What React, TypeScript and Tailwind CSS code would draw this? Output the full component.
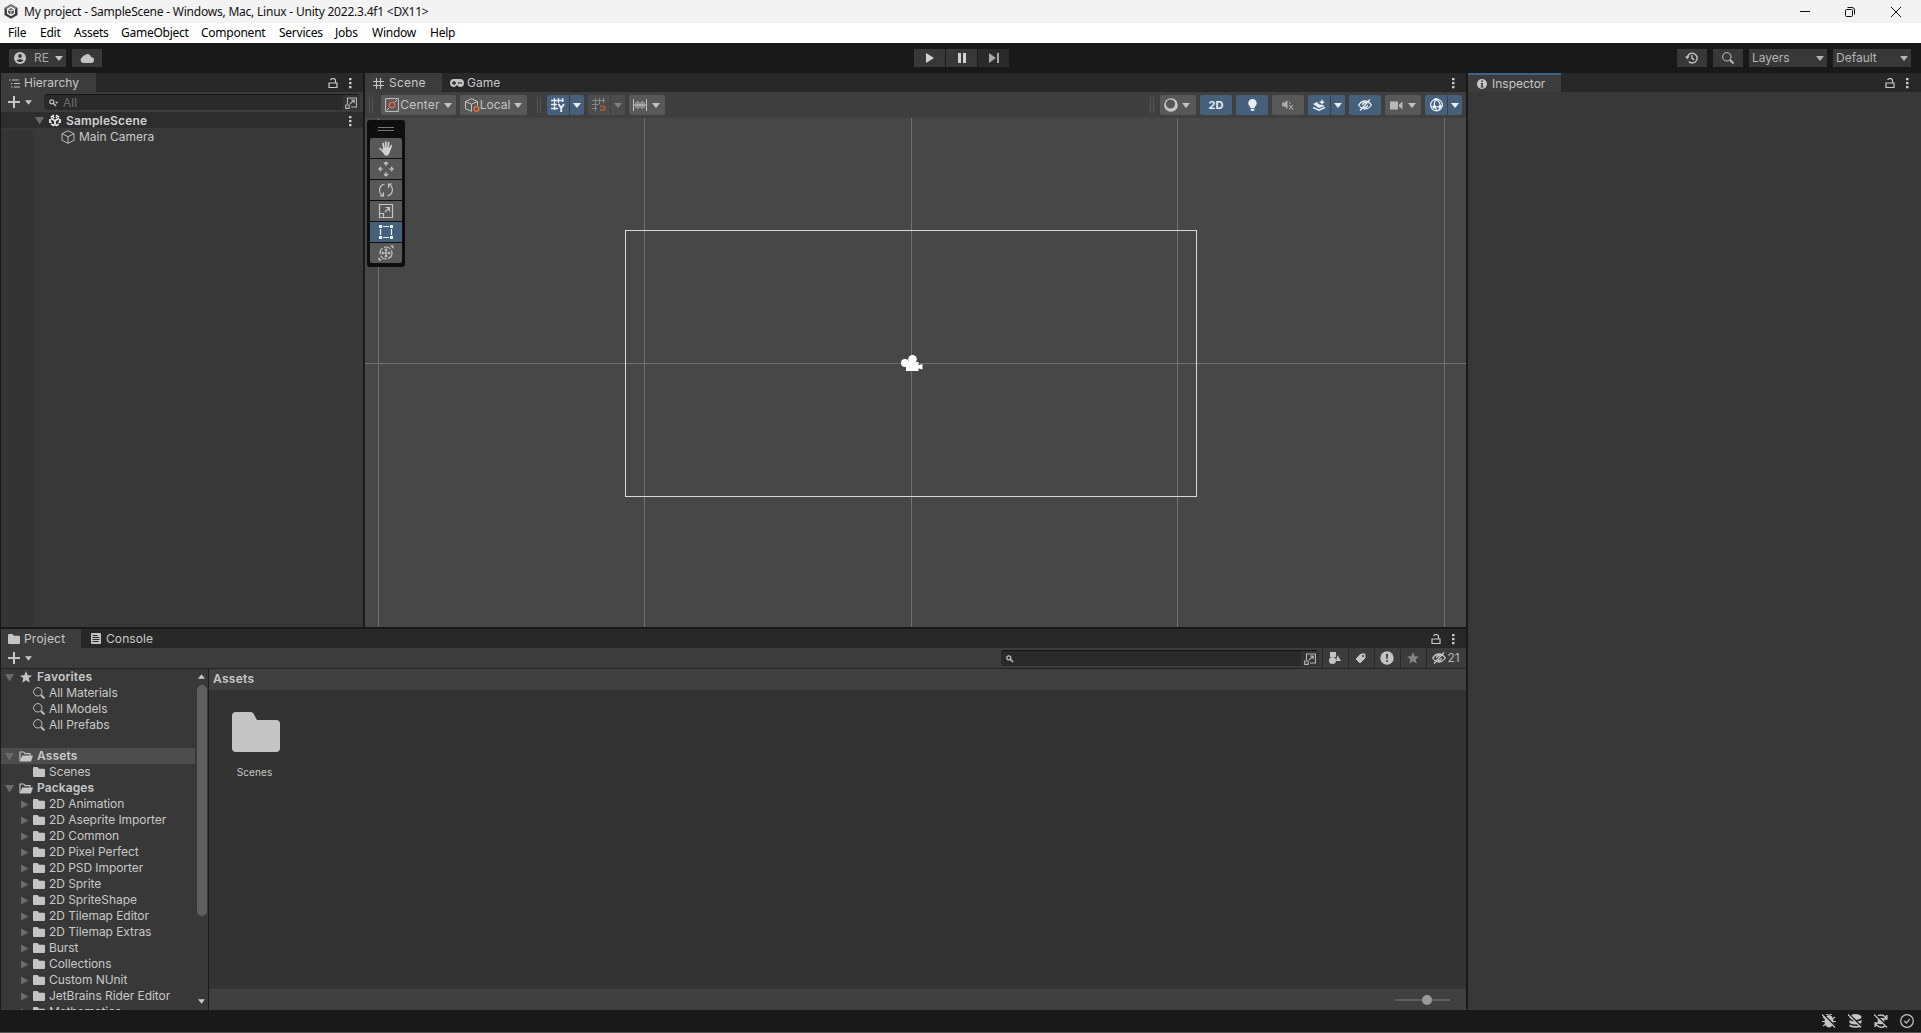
/**
 * Editor main window
 * Title bar, menu, global toolbar and the docked panels
 */

import type { ReactNode } from "react";

const MENU_ITEMS = [
  { label: "File", width: "w-[32px]" },
  { label: "Edit", width: "w-[34px]" },
  { label: "Assets", width: "w-[47px]" },
  { label: "GameObject", width: "w-[80px]" },
  { label: "Component", width: "w-[78px]" },
  { label: "Services", width: "w-[56px]" },
  { label: "Jobs", width: "w-[37px]" },
  { label: "Window", width: "w-[58px]" },
  { label: "Help", width: "w-[40px]" },
];

const SEARCHES = ["All Materials", "All Models", "All Prefabs"];

const PACKAGES = [
  "2D Animation",
  "2D Aseprite Importer",
  "2D Common",
  "2D Pixel Perfect",
  "2D PSD Importer",
  "2D Sprite",
  "2D SpriteShape",
  "2D Tilemap Editor",
  "2D Tilemap Extras",
  "Burst",
  "Collections",
  "Custom NUnit",
  "JetBrains Rider Editor",
  "Mathematics",
];

interface IconProps {
  children: ReactNode;
  className?: string;
}

// 16x16 stroked icon, the size used almost everywhere in the editor
function Icon({ children, className = "" }: IconProps) {
  return (
    <svg
      viewBox="0 0 16 16"
      fill="none"
      stroke="currentColor"
      strokeWidth="1.2"
      className={`size-4 shrink-0 ${className}`}
    >
      {children}
    </svg>
  );
}

function Caret({ className = "" }: { className?: string }) {
  return (
    <svg viewBox="0 0 8 5" className={`w-2 h-[5px] shrink-0 ${className}`}>
      <path d="M0 0h8L4 5z" fill="currentColor" />
    </svg>
  );
}

function Foldout({ open = false }: { open?: boolean }) {
  return (
    <svg viewBox="0 0 9 9" className="size-[9px] shrink-0 text-[#6b6b6b]">
      <path d={open ? "M0 1h9L4.500 8.500z" : "M1 0.500v8L8.500 4.500z"} fill="currentColor" />
    </svg>
  );
}

function KebabIcon() {
  return (
    <svg viewBox="0 0 3 12" className="w-[3px] h-3 shrink-0">
      <path d="M0 1h2.500v2.200H0zM0 5h2.500v2.200H0zM0 9h2.500v2.200H0z" fill="currentColor" />
    </svg>
  );
}

function LockIcon() {
  return (
    <svg viewBox="0 0 10 12" className="w-[10px] h-3 shrink-0" fill="none" stroke="currentColor" strokeWidth="1.200">
      <path d="M1 6h8v4.500H1zM7.500 6V3.500A1.800 1.800 0 0 0 5.700 1.600H4.500A1.800 1.800 0 0 0 2.700 3" />
    </svg>
  );
}

function PlusIcon() {
  return (
    <svg viewBox="0 0 12 12" className="size-3 shrink-0">
      <path d="M5 0h2v5h5v2H7v5H5V7H0V5h5z" fill="currentColor" />
    </svg>
  );
}

function FolderIcon() {
  return (
    <svg viewBox="0 0 12 10" className="w-3 h-[10px] shrink-0">
      <path d="M0 1q0-1 1-1h3.500l1.500 1.800H11q1 0 1 1V9q0 1-1 1H1q-1 0-1-1z" fill="#c4c4c4" />
    </svg>
  );
}

function OpenFolderIcon() {
  return (
    <svg viewBox="0 0 14 11" className="w-[14px] h-[11px] shrink-0">
      <path d="M1 10V1h3.800l1.400 1.600H11V4.500" fill="none" stroke="#c4c4c4" strokeWidth="1.200" />
      <path d="M3.300 4.500H14L12 10.600H0.600z" fill="#c4c4c4" />
    </svg>
  );
}

function MagnifierIcon() {
  return (
    <svg viewBox="0 0 12 12" className="size-3 shrink-0" fill="none" stroke="#c4c4c4">
      <circle cx="4.800" cy="4.800" r="4.200" strokeWidth="1" />
      <path d="M8 8l3.500 3.500" strokeWidth="1.800" />
    </svg>
  );
}

function SmallMagnifierIcon({ caret = false }: { caret?: boolean }) {
  return (
    <svg viewBox="0 0 10 8" className="w-[10px] h-2 shrink-0" fill="none" stroke="#c4c4c4">
      <circle cx="2.800" cy="2.800" r="2" strokeWidth="1.200" />
      <path d="M4.300 4.300L7 7" strokeWidth="1.500" />
      {caret && <path d="M6 2.800h3.400L7.700 4.800z" fill="#c4c4c4" stroke="none" />}
    </svg>
  );
}

function PopOutIcon() {
  return (
    <svg viewBox="0 0 12 12" className="size-3 shrink-0" fill="none" stroke="#b8b8b8" strokeWidth="1.100">
      <path d="M2.500 7V1h9v9H6M0.700 8h3.500v3.400H0.700zM5 7l4-3.800M6 3h3.200v3.200" />
    </svg>
  );
}

function SlashedEyeIcon() {
  return (
    <svg viewBox="0 0 14 12" className="w-[14px] h-3 shrink-0" fill="none" stroke="currentColor" strokeWidth="1.300">
      <path d="M0.700 6Q3.500 2 7 2T13.300 6Q10.500 10 7 10T0.700 6z" />
      <path d="M4.500 6a2.500 2.500 0 0 1 3.500-2.300M9.500 6a2.500 2.500 0 0 1-3.500 2.300M2 11.500L12 0.500" />
    </svg>
  );
}

function InfoIcon() {
  return (
    <svg viewBox="0 0 10 10" className="size-[10px] shrink-0">
      <circle cx="5" cy="5" r="5" fill="#c8c8c8" />
      <path d="M4.200 1.500h1.700v1.600H4.200zM3.700 4h2.200v3.500h.6v1H3.600v-1h.7V5h-.6z" fill="#3c3c3c" />
    </svg>
  );
}

// Cube with a gap at every second corner
function UnityMark({ className }: { className: string }) {
  return (
    <svg viewBox="0 0 12 13" fill="none" stroke="currentColor" strokeWidth="1.800" className={className}>
      <path d="M5 1.300L1.800 3.200M7 1.300l3.200 1.900M1 5v4M11 5v4M2.200 9.900l3 1.800M9.800 9.900l-3 1.800" />
      <path d="M6 6.700L2 4.300M6 6.700l4-2.400M6 6.700v5" />
      <path d="M3.800 2.600L5.200 4M8.200 2.600L6.800 4M1 8.600L2.600 7.800M11 8.600L9.400 7.800" strokeWidth="1.300" />
    </svg>
  );
}

function TitleBar() {
  return (
    <div className="flex h-[23px] items-center bg-[#f3f3f3] pl-1 font-['Noto_Sans','Open_Sans',sans-serif] text-[12px] text-[#111]">
      <svg viewBox="0 0 14 15" className="mr-[6px] h-[15px] w-[14px] shrink-0">
        <path d="M7 .3l6.500 3.600v7.200L7 14.700.5 11.100V3.900z" fill="#3a3a3a" />
        <path d="M7 .3l6.500 3.600L7 7.500.5 3.900z" fill="#777" />
        <path d="M7 3.200l3.400 2v4.200L7 11.500 3.600 9.400V5.200z" fill="none" stroke="#f3f3f3" strokeWidth="1.300" />
        <path d="M7 7.300v4M7 7.300L3.800 5.400M7 7.300l3.200-1.900" stroke="#f3f3f3" />
      </svg>
      <span className="whitespace-nowrap tracking-[-0.22px]">
        My project - SampleScene - Windows, Mac, Linux - Unity 2022.3.4f1 &lt;DX11&gt;
      </span>
      <div className="ml-auto flex items-center pr-5">
        <svg viewBox="0 0 10 10" className="mr-[35px] size-[10px]" stroke="#111">
          <path d="M0 4.500h10" />
        </svg>
        <svg viewBox="0 0 10 10" className="mr-9 size-[10px]" fill="none" stroke="#111">
          <rect x=".5" y="2.500" width="7" height="7" rx="1" />
          <path d="M2.500 .5H7a2.500 2.500 0 0 1 2.500 2.500V7.500" />
        </svg>
        <svg viewBox="0 0 10 10" className="size-[10px]" stroke="#111">
          <path d="M0 0l10 10M10 0L0 10" />
        </svg>
      </div>
    </div>
  );
}

function MenuBar() {
  return (
    <div className="flex h-5 items-center bg-white pl-2 font-['Noto_Sans','Open_Sans',sans-serif] text-[12px] tracking-[-0.25px] text-black">
      {MENU_ITEMS.map((item) => (
        <span key={item.label} className={`${item.width} whitespace-nowrap`}>
          {item.label}
        </span>
      ))}
    </div>
  );
}

function GlobalToolbar() {
  return (
    <div className="flex h-[30px] items-center justify-between pr-[10px] pl-[9px] text-[#c4c4c4]">
      <div className="flex w-[803px] gap-[6px]">
        <div className="flex h-[18px] w-[57px] items-center bg-[#383838] pl-[5px]">
          <svg viewBox="0 0 12 12" className="size-3">
            <circle cx="6" cy="6" r="6" fill="#c4c4c4" />
            <circle cx="6" cy="4" r="1.900" fill="#383838" />
            <path d="M2.500 8.500Q6 5.500 9.500 8.500 6 11.500 2.500 8.500z" fill="#383838" />
          </svg>
          <span className="ml-[8px] text-[#a8a8a8]">RE</span>
          <Caret className="ml-auto mr-[3px]" />
        </div>
        <div className="flex h-[18px] w-[30px] items-center justify-center bg-[#383838]">
          <svg viewBox="0 0 14 10" className="h-[10px] w-[14px]">
            <path d="M3 10a3 3 0 0 1-.6-5.700A2.500 2.500 0 0 1 5 2.200 3.500 3.500 0 0 1 11 4a3 3 0 0 1 0 6z" fill="#c4c4c4" />
          </svg>
        </div>
      </div>
      <div className="flex gap-px">
        <div className="flex h-[18px] w-[31px] items-center justify-center bg-[#383838]">
          <svg viewBox="0 0 8 10" className="h-[10px] w-2">
            <path d="M0 0l8 5-8 5z" fill="#d2d2d2" />
          </svg>
        </div>
        <div className="flex h-[18px] w-[31px] items-center justify-center bg-[#383838]">
          <svg viewBox="0 0 8 10" className="h-[10px] w-2">
            <path d="M0 0h3v10H0zM5 0h3v10H5z" fill="#d2d2d2" />
          </svg>
        </div>
        <div className="flex h-[18px] w-[31px] items-center justify-center bg-[#2a2a2a]">
          <svg viewBox="0 0 10 10" className="h-[10px] w-[10px]">
            <path d="M0 0l7 5-7 5zM8 0h2v10H8z" fill="#a8a8a8" />
          </svg>
        </div>
      </div>
      <div className="flex w-[800px] justify-end gap-[6px]">
        <div className="flex h-[18px] w-[30px] items-center justify-center bg-[#383838] pr-px">
          <svg viewBox="0 0 13 12" className="h-3 w-[13px]" fill="none" stroke="#c4c4c4" strokeWidth="1.400">
            <path d="M2.300 6a4.900 4.900 0 1 1 1.500 3.600M7 3v3.300l2.300 1.500" />
            <path d="M0 4.500h4.600L2.300 7.300z" fill="#c4c4c4" stroke="none" />
          </svg>
        </div>
        <div className="flex h-[18px] w-[30px] items-center justify-center bg-[#383838]">
          <MagnifierIcon />
        </div>
        <div className="flex h-[18px] w-[78px] items-center justify-between bg-[#383838] px-[3px] text-[#b4b4b4]">
          <span>Layers</span>
          <Caret />
        </div>
        <div className="flex h-[18px] w-[78px] items-center justify-between bg-[#383838] px-[3px] text-[#b4b4b4]">
          <span>Default</span>
          <Caret />
        </div>
      </div>
    </div>
  );
}

function HierarchyPanel() {
  return (
    <section className="flex w-[362px] flex-col bg-[#383838]">
      <div className="flex h-[19px] shrink-0 items-center bg-[#282828] pr-[11px]">
        <div className="flex h-full w-[95px] items-center bg-[#3c3c3c] pt-px pl-2">
          <svg viewBox="0 0 11 9" className="mr-[4px] h-[9px] w-[11px]" stroke="#c4c4c4" strokeWidth="1.200">
            <path d="M0 1h1.600M3 1h7M2 4.500h1.500M5 4.500h6M2 8h1.500M5 8h6" />
          </svg>
          <span>Hierarchy</span>
        </div>
        <div className="ml-auto flex items-center gap-[11px]">
          <LockIcon />
          <KebabIcon />
        </div>
      </div>
      <div className="flex h-5 shrink-0 items-center bg-[#3c3c3c] pl-[7px]">
        <PlusIcon />
        <Caret className="ml-[5px] h-[4px] w-[7px]" />
        <div className="ml-[12px] flex h-4 w-[316px] items-center rounded border-t border-[#141414] bg-[#2a2a2a] pl-[5px]">
          <SmallMagnifierIcon caret />
          <span className="ml-1 text-[#6e6e6e]">All</span>
          <div className="ml-auto flex h-full w-[18px] items-center justify-center bg-[#333]">
            <PopOutIcon />
          </div>
        </div>
      </div>
      <div className="flex min-h-0 flex-1">
        <div className="w-8 bg-[#343434]" />
        <div className="flex-1">
          <div className="-ml-8 flex h-[17px] items-center border-b border-[#3a3a3a] bg-[#2d2d2d] pt-px pr-[11px] pl-[34px]">
            <Foldout open />
            <UnityMark className="mr-[5px] ml-[5px] h-[13px] w-3 text-[#e8e8e8]" />
            <span className="font-semibold tracking-[0.15px] text-[#d2d2d2]">SampleScene</span>
            <div className="ml-auto">
              <KebabIcon />
            </div>
          </div>
          <div className="flex h-4 items-center pl-[28px]">
            <svg viewBox="0 0 14 14" className="mr-[4px] size-[14px]" fill="none" stroke="#b8b8b8">
              <path d="M7 .7l6 3v6.600l-6 3-6-3V3.700zM1 3.700l6 3 6-3M7 6.700v6.600" />
            </svg>
            <span>Main Camera</span>
          </div>
        </div>
      </div>
    </section>
  );
}

interface ToolButtonProps {
  children: ReactNode;
  className: string;
  active?: boolean;
  dimmed?: boolean;
}

function ToolButton({ children, className, active = false, dimmed = false }: ToolButtonProps) {
  let colors = "bg-[#585858] text-[#c4c4c4]";
  if (active) colors = "bg-[#46607c] text-[#e8eef4]";
  if (dimmed) colors = "bg-[#4c4c4c] text-[#808080]";

  return (
    <div className={`flex h-5 items-center justify-center rounded-[2px] ${colors} ${className}`}>
      {children}
    </div>
  );
}

function Grip() {
  return <div className="h-4 w-1 border-x border-[#555]" />;
}

function SceneToolbar() {
  return (
    <div className="flex h-[26px] shrink-0 items-center bg-[#3f3f3f] pr-[4px] pl-1">
      <Grip />
      <ToolButton className="ml-[8px] w-[75px]">
        <svg viewBox="0 0 14 14" className="size-[14px]" fill="none" stroke="#c4c4c4">
          <path d="M.6.6h12.800v12.800H.6zM2 12l2.500-2.500M9.500 4.500L12 2" />
          <circle cx="7" cy="7" r="2.700" stroke="#e0624a" strokeWidth="1.400" />
        </svg>
        <span className="ml-px tracking-[0.2px]">Center</span>
        <Caret className="ml-1" />
      </ToolButton>
      <ToolButton className="ml-1 w-[67px]">
        <svg viewBox="0 0 15 14" className="h-[14px] w-[15px]" fill="none" stroke="#c4c4c4">
          <path d="M6.500 13.300l-6-2.600V3.500L6.500.7l6 2.800v4M.5 3.500l6 2.700 6-2.700M6.500 6.200v7" />
          <circle cx="11.500" cy="10.800" r="2.400" stroke="#e07038" strokeWidth="1.500" />
        </svg>
        <span>Local</span>
        <Caret className="ml-1" />
      </ToolButton>
      <div className="ml-[10px]">
        <Grip />
      </div>
      <ToolButton active className="ml-[6px] w-[22px] rounded-r-none">
        <svg viewBox="0 0 14 14" className="size-[14px]" fill="none" stroke="currentColor" strokeWidth="1.300">
          <path d="M3.500 0v12M7.500 0v5M11.500 0v4M0 2.500h13M0 6.500h6M0 10.500h7" />
          <path d="M7.500 6l2.700 4v4M13 6l-2.800 4" strokeWidth="1.900" />
        </svg>
      </ToolButton>
      <ToolButton active className="ml-px w-[14px] rounded-l-none">
        <Caret />
      </ToolButton>
      <ToolButton dimmed className="ml-1 w-[22px] rounded-r-none">
        <svg viewBox="0 0 14 14" className="size-[14px]" fill="none" stroke="#858585">
          <path d="M3.500 0v13M7.500 0v6M11.500 0v5M0 2.500h13M0 6.500h7M0 10.500h5" />
          <path d="M8 8.300h3a1.900 1.900 0 0 1 0 3.900H8" stroke="#a85b40" strokeWidth="1.700" />
        </svg>
      </ToolButton>
      <ToolButton dimmed className="ml-px w-[14px] rounded-l-none">
        <Caret />
      </ToolButton>
      <ToolButton className="ml-1 w-9 pr-[2px]">
        <svg viewBox="0 0 14 14" className="size-[14px]" stroke="#c4c4c4">
          <path d="M.5 1v12M3 4v6M5 3v8M7 4.500v5M9 3v8M11 4v6M13.500 1v12M0 7h14" />
        </svg>
        <Caret className="ml-[5px]" />
      </ToolButton>

      <div className="ml-auto">
        <Grip />
      </div>
      <ToolButton className="ml-[6px] w-9 pr-[2px]">
        <svg viewBox="0 0 14 14" className="size-[14px]">
          <circle cx="7" cy="7" r="6.800" fill="#c8c8c8" />
          <circle cx="6.500" cy="6" r="4.600" fill="#585858" />
        </svg>
        <Caret className="ml-[4px]" />
      </ToolButton>
      <ToolButton active className="ml-1 w-8">
        <span className="text-[11px] font-bold">2D</span>
      </ToolButton>
      <ToolButton active className="ml-1 w-8">
        <svg viewBox="0 0 9 12" className="h-3 w-[9px]">
          <path d="M4.500 0a4.200 4.200 0 0 1 2.300 7.700V9H2.200V7.700A4.200 4.200 0 0 1 4.500 0zM2.600 9.800h3.800v1L5.500 12h-2l-.9-1.200z" fill="currentColor" />
        </svg>
      </ToolButton>
      <ToolButton className="ml-1 w-8">
        <svg viewBox="0 0 12 10" className="h-[10px] w-3" fill="none" stroke="#b0b0b0">
          <path d="M.8 2.500v4M2.500 2.500v4" strokeWidth="1.500" />
          <path d="M2.500 3L5.500 0v9L2.500 6z" fill="#b0b0b0" stroke="none" />
          <path d="M7 5l4 4.500M11 5L7 9.500" strokeWidth="1.100" />
          <path d="M7 1.500q1.200 1 1.200 2.700" />
        </svg>
      </ToolButton>
      <ToolButton active className="ml-1 w-[22px] rounded-r-none">
        <svg viewBox="0 0 13 12" className="h-3 w-[13px]">
          <path d="M0 5l4-2q1.500 3 5 3l3 1L6 9zM0 7.700L6 10.300l6-2.600v1.500L6 12 0 9.200z" fill="currentColor" />
          <path d="M9 0l.9 2.300 2.300.9-2.300.9L9 6.400l-.9-2.300-2.300-.9 2.300-.9z" fill="currentColor" />
        </svg>
      </ToolButton>
      <ToolButton active className="ml-px w-[14px] rounded-l-none">
        <Caret />
      </ToolButton>
      <ToolButton active className="ml-1 w-8">
        <SlashedEyeIcon />
      </ToolButton>
      <ToolButton className="ml-1 w-9">
        <svg viewBox="0 0 13 9" className="h-[9px] w-[13px]">
          <path d="M0 .5h8v8H0zM9 3.500L12.500.5v8L9 5.500z" fill="#b8b8b8" />
        </svg>
        <Caret className="ml-[5px]" />
      </ToolButton>
      <ToolButton active className="ml-1 w-[22px] rounded-r-none">
        <svg viewBox="0 0 15 14" className="h-[14px] w-[15px]" fill="none" stroke="currentColor" strokeWidth="1.200">
          <circle cx="7.500" cy="7" r="5.900" />
          <path d="M6.800 1.500Q4.500 5 5.500 9M2 8.800h9M7 1.500q4.500 2.500 4.300 7l-1.800 4M6 9l2 4" />
          <path d="M4 7.500h3v3H4zM5.500 0h3v2.500h-3zM10 7h2.700v3H10z" fill="currentColor" stroke="none" />
        </svg>
      </ToolButton>
      <ToolButton active className="ml-px w-[14px] rounded-l-none">
        <Caret />
      </ToolButton>
    </div>
  );
}

function ToolPalette() {
  return (
    <div className="absolute top-[2px] left-[2px] flex w-[38px] flex-col items-center gap-px rounded-[3px] bg-[#0e0e0e] pb-1 text-[#c4c4c4]">
      <div className="flex h-[17px] items-center">
        <div className="h-1 w-4 border-y border-[#777]" />
      </div>
      <ToolButton className="w-8 rounded-b-none">
        <svg viewBox="0 0 14 15" className="h-[15px] w-[14px]" fill="none" stroke="#d0d0d0" strokeLinecap="round">
          <path d="M1 7.500l3 3M4 2.500l1 5M6.800 1v6M9.600 1.700L9 7.500M12.300 4.500L11 8.500" strokeWidth="1.700" />
          <path d="M4 6.500h7.500L11 11l-2 3.500H6L3.500 11z" fill="#d0d0d0" stroke="none" />
        </svg>
      </ToolButton>
      <ToolButton className="w-8 rounded-none">
        <Icon>
          <path d="M8 1v4M8 11v4M1 8h4M11 8h4M6 3l2-2 2 2M6 13l2 2 2-2M3 6L1 8l2 2M13 6l2 2-2 2" />
        </Icon>
      </ToolButton>
      <ToolButton className="w-8 rounded-none">
        <Icon>
          <path d="M6.500 2.200A6 6 0 0 0 5 13.500M9.500 13.800A6 6 0 0 0 11 2.500M1.800 14H5.500V10.300M14.200 2H10.500v3.700" />
        </Icon>
      </ToolButton>
      <ToolButton className="w-8 rounded-none">
        <Icon>
          <path d="M1.500 1.500h13v13h-13zM1.500 10.500h4v4M7 9l4-4M7.500 4.500h4v4" />
        </Icon>
      </ToolButton>
      <ToolButton active className="w-8 rounded-none">
        <Icon>
          <path d="M5 2.500h6M5 13.500h6M2.500 5v6M13.500 5v6" />
          <path d="M1 1h3v3H1zM12 1h3v3h-3zM1 12h3v3H1zM12 12h3v3h-3z" fill="currentColor" stroke="none" />
        </Icon>
      </ToolButton>
      <ToolButton className="w-8 rounded-t-none">
        <Icon>
          <circle cx="8" cy="8" r="6" strokeDasharray="7 1.500" />
          <path d="M8 4v8M4 8h8M6.700 5.200L8 4l1.300 1.200M6.700 10.800L8 12l1.300-1.200M5.200 6.700L4 8l1.200 1.300M10.800 6.700L12 8l-1.200 1.300" />
          <path d="M12 .5h3.500V4zM.5 12v3.500H4z" fill="currentColor" stroke="none" />
        </Icon>
      </ToolButton>
    </div>
  );
}

function ScenePanel() {
  return (
    <section className="flex w-[1101px] flex-col bg-[#474747]">
      <div className="flex h-[19px] shrink-0 items-center bg-[#282828] pr-[11px]">
        <div className="flex h-full w-[77px] items-center bg-[#3c3c3c] pt-px pl-2">
          <svg viewBox="0 0 11 11" className="mr-[5px] size-[11px]" stroke="#c4c4c4" strokeWidth="1.200">
            <path d="M3.500 0v11M7.500 0v11M0 3.500h11M0 7.500h11" />
          </svg>
          <span className="tracking-[0.2px]">Scene</span>
        </div>
        <svg viewBox="0 0 14 8" className="mt-px mr-[3px] ml-2 h-2 w-[14px]">
          <path d="M4 0h6a4 4 0 0 1 0 8Q8.500 8 8 6.500H6Q5.500 8 4 8A4 4 0 0 1 4 0z" fill="#c4c4c4" />
          <path d="M3.300 2h1.400v1.300H6v1.400H4.700V6H3.300V4.700H2V3.300h1.300zM8 3.300h1.500v1.500H8zM10.300 3.300h1.500v1.500h-1.500z" fill="#282828" />
        </svg>
        <span className="pt-px">Game</span>
        <div className="ml-auto">
          <KebabIcon />
        </div>
      </div>
      <SceneToolbar />
      <div className="relative min-h-0 flex-1">
        <svg viewBox="0 0 1101 509" className="block h-[509px] w-[1101px]" shapeRendering="crispEdges">
          <path
            d="M13.500 0v509M279.500 0v509M546.500 0v509M812.500 0v509M1079.500 0v509M0 245.500h1101"
            stroke="#707070"
          />
          <rect x="260.500" y="112.500" width="571" height="266" fill="none" stroke="#d8d8d8" />
          <g fill="#fff" shapeRendering="auto">
            <circle cx="540" cy="245" r="4" />
            <circle cx="547.500" cy="241.300" r="4.300" />
            <path d="M541 244h12.500v9H541z" />
            <path d="M552 247.500l5.500-1.500v5.500l-5.500-1.500z" />
          </g>
        </svg>
        <ToolPalette />
      </div>
    </section>
  );
}

function TreeRow({ children, className }: IconProps) {
  return (
    <div className={`flex h-4 shrink-0 items-center whitespace-nowrap ${className}`}>{children}</div>
  );
}

function ProjectTree() {
  return (
    <div className="flex w-[208px] shrink-0 border-r border-[#1c1c1c] bg-[#383838]">
      <div className="flex w-[194px] flex-col overflow-hidden tracking-[-0.06px]">
        <TreeRow className="pl-[4px] font-semibold tracking-[0.2px]">
          <Foldout open />
          <svg viewBox="0 0 12 12" className="mr-[5px] ml-[6px] size-3">
            <path d="M6 0l1.700 4.200 4.300.3-3.300 2.800 1.100 4.400L6 9.300l-3.800 2.400 1.100-4.400L0 4.500l4.300-.3z" fill="#c4c4c4" />
          </svg>
          Favorites
        </TreeRow>
        {SEARCHES.map((name) => (
          <TreeRow key={name} className="gap-[4px] pl-8">
            <MagnifierIcon />
            {name}
          </TreeRow>
        ))}
        <TreeRow className="mt-[15px] gap-[4px] bg-[#4d4d4d] pl-[4px] font-semibold tracking-[0.15px]">
          <Foldout open />
          <span className="ml-px">
            <OpenFolderIcon />
          </span>
          Assets
        </TreeRow>
        <TreeRow className="gap-[4px] pl-8">
          <FolderIcon />
          Scenes
        </TreeRow>
        <TreeRow className="gap-[4px] pl-[4px] font-semibold tracking-[0.1px]">
          <Foldout open />
          <span className="ml-px">
            <OpenFolderIcon />
          </span>
          Packages
        </TreeRow>
        {PACKAGES.map((name) => (
          <TreeRow key={name} className="gap-[4px] pl-[19px]">
            <Foldout />
            <FolderIcon />
            {name}
          </TreeRow>
        ))}
      </div>
      <div className="flex flex-1 flex-col items-center pt-[5px] pb-[6px]">
        <Caret className="h-[4px] w-[7px] rotate-180" />
        <div className="mt-[6px] h-[231px] w-[10px] rounded-full bg-[#5f5f5f]" />
        <Caret className="mt-auto h-[4px] w-[7px]" />
      </div>
    </div>
  );
}

function FilterButton({ children, className = "w-[25px] pr-[2px]" }: IconProps) {
  return (
    <div className="border-l border-[#2a2a2a]">
      <div className={`flex h-5 items-center justify-center ${className}`}>{children}</div>
    </div>
  );
}

function ProjectPanel() {
  return (
    <section className="flex h-[381px] flex-col bg-[#333]">
      <div className="flex h-[19px] shrink-0 items-center bg-[#282828] pr-[11px]">
        <div className="flex h-full w-20 items-center gap-[4px] bg-[#3c3c3c] pt-px pl-[7px]">
          <FolderIcon />
          <span className="tracking-[0.2px]">Project</span>
        </div>
        <svg viewBox="0 0 10 11" className="mr-[5px] ml-[10px] h-[11px] w-[10px]">
          <rect width="10" height="11" rx="1" fill="#c4c4c4" />
          <path d="M1.500 2.500h5M1.500 4.500h7M1.500 6.500h7M1.500 8.500h6" stroke="#282828" />
        </svg>
        <span className="pt-px tracking-[0.1px]">Console</span>
        <div className="ml-auto flex items-center gap-[11px]">
          <LockIcon />
          <KebabIcon />
        </div>
      </div>
      <div className="flex h-[21px] shrink-0 items-center border-b border-[#232323] bg-[#3c3c3c] pl-[7px]">
        <PlusIcon />
        <Caret className="ml-[5px] h-[4px] w-[7px]" />
        <div className="ml-auto flex h-4 w-[318px] items-center rounded border-t border-[#141414] bg-[#2a2a2a] pl-[5px]">
          <SmallMagnifierIcon />
          <div className="ml-auto flex h-full w-[18px] items-center justify-center bg-[#333]">
            <PopOutIcon />
          </div>
        </div>
        <div className="ml-[3px] flex">
          <FilterButton>
            <svg viewBox="0 0 12 12" className="size-3" fill="#c4c4c4">
              <path d="M1 0h6v5H1zM8.500 3l3.500 6H7z" />
              <circle cx="3.500" cy="8.500" r="3.500" />
            </svg>
          </FilterButton>
          <FilterButton>
            <svg viewBox="0 0 11 11" className="size-[11px]">
              <path d="M5.500 1.300L9.700.8 10 5l-5 5L1 6z" fill="#c4c4c4" stroke="#c4c4c4" strokeLinejoin="round" />
              <circle cx="8" cy="3" r="1" fill="#3c3c3c" />
            </svg>
          </FilterButton>
          <FilterButton>
            <svg viewBox="0 0 14 14" className="size-[14px]">
              <circle cx="7" cy="7" r="6.700" fill="#c4c4c4" />
              <path d="M6 3h2l-.4 5H6.400zM6.200 9h1.600v1.700H6.200z" fill="#333" />
            </svg>
          </FilterButton>
          <FilterButton>
            <svg viewBox="0 0 12 12" className="size-3">
              <path d="M6 0l1.700 4.200 4.300.3-3.300 2.800 1.100 4.400L6 9.300l-3.800 2.400 1.100-4.400L0 4.500l4.300-.3z" fill="#858585" />
            </svg>
          </FilterButton>
          <FilterButton className="w-[39px] pr-px">
            <SlashedEyeIcon />
            <span className="ml-px text-[#b4b4b4]">21</span>
          </FilterButton>
        </div>
      </div>
      <div className="flex min-h-0 flex-1">
        <ProjectTree />
        <div className="flex flex-1 flex-col">
          <div className="flex h-[21px] items-center bg-[#404040] pb-px pl-1 font-semibold tracking-[0.3px]">
            Assets
          </div>
          <div className="flex flex-1 items-start pt-[22px] pl-[23px]">
            <div className="flex w-12 flex-col items-center">
              <svg viewBox="0 0 48 40" className="h-10 w-12">
                <path d="M0 4q0-4 4-4h15q1.500 0 2.500 1.500L25 8h19q4 0 4 4v24q0 4-4 4H4q-4 0-4-4z" fill="#c4c4c4" />
              </svg>
              <span className="mt-[13px] mr-[3px] text-[10px] leading-[14px] tracking-[0.1px]">Scenes</span>
            </div>
          </div>
          <div className="flex h-[21px] items-center justify-end bg-[#404040] pr-4">
            <div className="flex h-[2px] w-[55px] items-center bg-[#5e5e5e] pl-[27px]">
              <div className="size-[10px] shrink-0 rounded-full bg-[#999]" />
            </div>
          </div>
        </div>
      </div>
    </section>
  );
}

function InspectorPanel() {
  return (
    <section className="flex flex-1 flex-col bg-[#383838]">
      <div className="flex h-[19px] items-center bg-[#282828] pr-[12px]">
        <div className="flex h-full w-[93px] items-center gap-[5px] border-t-2 border-[#3a6590] bg-[#3c3c3c] pl-[9px]">
          <InfoIcon />
          <span>Inspector</span>
        </div>
        <div className="ml-auto flex items-center gap-[11px]">
          <LockIcon />
          <KebabIcon />
        </div>
      </div>
    </section>
  );
}

function StatusBar() {
  return (
    <div className="flex h-[23px] items-center justify-end gap-3 border-b border-[#555] pr-[7px]">
      <svg viewBox="0 0 14 14" className="size-[14px]" fill="none" stroke="#c4c4c4">
        <ellipse cx="7" cy="7.500" rx="4.500" ry="6" fill="#c4c4c4" stroke="none" />
        <path d="M1 3l12 8.500M13 3L1 12M0 7.500h14M4 0l6 3M10 0L4 3" strokeWidth="1.200" />
        <path d="M1 0l13 13" stroke="#191919" strokeWidth="1.600" />
        <path d="M0 .5l13 13" strokeWidth="1.300" />
      </svg>
      <svg viewBox="0 0 14 14" className="size-[14px]" fill="none" stroke="#c4c4c4">
        <ellipse cx="7.500" cy="3" rx="6" ry="3" fill="#c4c4c4" stroke="none" />
        <path d="M1.500 6q6 3 12 0v3q-6 3-12 0zM1.500 10.500q6 3 12 0v2q-6 2.500-12 0z" fill="#c4c4c4" stroke="none" />
        <path d="M1 0l13 13" stroke="#191919" strokeWidth="1.600" />
        <path d="M0 .5l13 13" strokeWidth="1.200" />
      </svg>
      <svg viewBox="0 0 14 14" className="size-[14px]" fill="none" stroke="#c4c4c4" strokeWidth="1.500">
        <path d="M3 2.500A6 6 0 0 1 12.500 5M1.500 9A6 6 0 0 0 11 11.800M12.800 1v4H9M1.200 13V9H5" />
        <circle cx="7" cy="7" r="3.300" fill="#c4c4c4" stroke="none" />
        <path d="M1 0l13 13" stroke="#191919" strokeWidth="1.600" />
        <path d="M0 .5l13 13" strokeWidth="1.200" />
      </svg>
      <svg viewBox="0 0 14 14" className="size-[14px]" fill="none" stroke="#c4c4c4" strokeWidth="1.200">
        <circle cx="7" cy="7" r="6.300" />
        <path d="M4.300 6.800l2 2.200 3.500-3.800" />
      </svg>
    </div>
  );
}

export default function App() {
  return (
    <div className="flex h-[1033px] w-[1921px] flex-col overflow-hidden bg-[#191919] font-['Inter','Roboto',sans-serif] text-[12px] leading-4 text-[#c8c8c8]">
      <TitleBar />
      <MenuBar />
      <GlobalToolbar />
      <div className="flex h-[937px] gap-[2px] pl-px">
        <div className="flex w-[1465px] flex-col gap-[2px]">
          <div className="flex h-[554px] gap-[2px]">
            <HierarchyPanel />
            <ScenePanel />
          </div>
          <ProjectPanel />
        </div>
        <InspectorPanel />
      </div>
      <StatusBar />
    </div>
  );
}
